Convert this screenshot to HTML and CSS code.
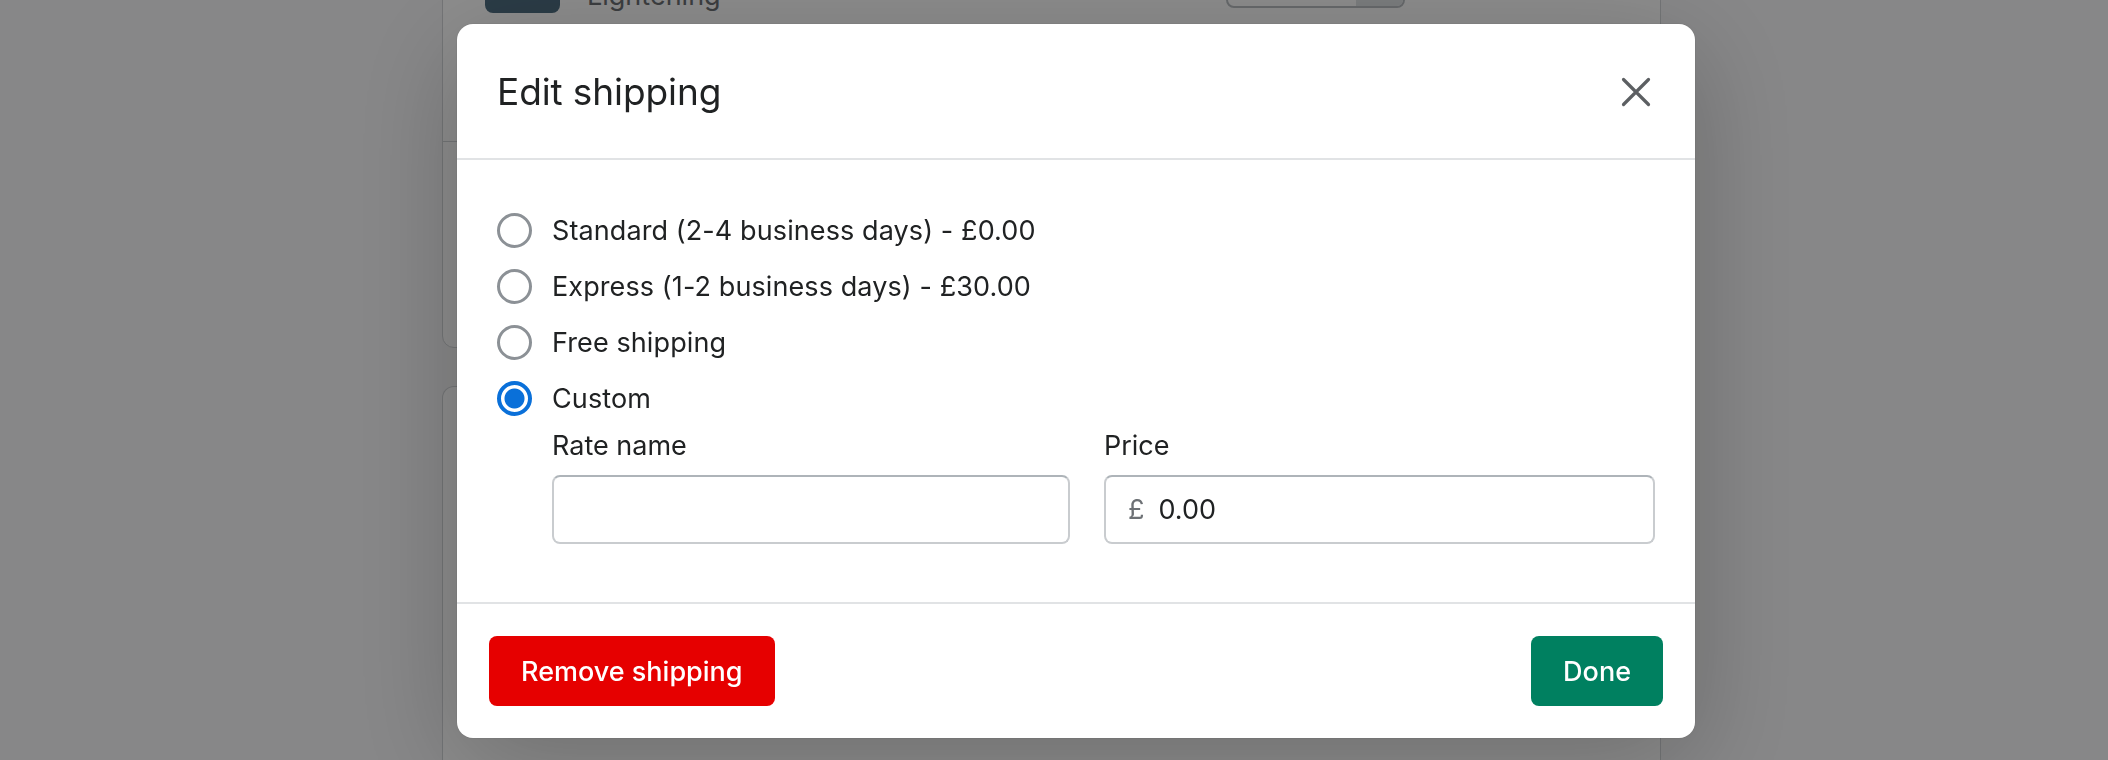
FILE: index.html
```html
<!DOCTYPE html>
<html lang="en">
<head>
    <meta charset="UTF-8">
    <meta name="viewport" content="width=device-width, initial-scale=1.0">
    <title>Order - Edit shipping</title>
    <link rel="stylesheet" href="styles.css">
</head>
<body>
    <!-- order page underneath the dialog -->
    <div class="page">
        <div class="card card-items">
            <div class="line-item">
                <div class="thumb"></div>
                <div class="item-info">
                    <div class="item-name">Brightening Serum</div>
                    <div class="item-variant">Lightening</div>
                </div>
                <div class="qty-box">
                    <span class="qty-value">1</span>
                    <span class="qty-stepper"></span>
                </div>
                <div class="item-price">£45.00</div>
            </div>
            <div class="card-section"></div>
        </div>
        <div class="card card-summary"></div>
    </div>

    <div class="backdrop"></div>

    <div class="modal-wrap">
        <div class="modal" role="dialog" aria-labelledby="modal-title">
            <div class="modal-header">
                <h2 class="modal-title" id="modal-title">Edit shipping</h2>
                <button class="close-btn" aria-label="Close">
                    <svg width="32" height="32" viewBox="0 0 32 32">
                        <path d="M3.5 3.5 L28.5 28.5 M28.5 3.5 L3.5 28.5" stroke="#5c5f62" stroke-width="3.2" stroke-linecap="round" fill="none"/>
                    </svg>
                </button>
            </div>

            <div class="modal-body">
                <label class="radio-row">
                    <input type="radio" name="rate" class="radio">
                    <span>Standard (2-4 business days) - £0.00</span>
                </label>
                <label class="radio-row">
                    <input type="radio" name="rate" class="radio">
                    <span>Express (1-2 business days) - £30.00</span>
                </label>
                <label class="radio-row">
                    <input type="radio" name="rate" class="radio">
                    <span>Free shipping</span>
                </label>
                <label class="radio-row">
                    <input type="radio" name="rate" class="radio" checked>
                    <span>Custom</span>
                </label>

                <div class="custom-fields">
                    <div class="field">
                        <label class="field-label" for="rate-name">Rate name</label>
                        <div class="text-input">
                            <input id="rate-name" type="text">
                        </div>
                    </div>
                    <div class="field">
                        <label class="field-label" for="rate-price">Price</label>
                        <div class="text-input">
                            <span class="prefix">£</span>
                            <input id="rate-price" type="text" value="0.00">
                        </div>
                    </div>
                </div>
            </div>

            <div class="modal-footer">
                <button class="btn btn-destructive">Remove shipping</button>
                <button class="btn btn-primary">Done</button>
            </div>
        </div>
    </div>
</body>
</html>
```

FILE: styles.css
```css
* {
    margin: 0;
    padding: 0;
    box-sizing: border-box;
}

body {
    font-family: Inter, 'Noto Sans', sans-serif;
    background: #f6f6f7;
    color: #202223;
    height: 760px;
    overflow: hidden;
}

/* page behind the dialog */
.page {
    width: 1219px;
    margin-left: calc(50% - 612px);
}

.card {
    background: #fff;
    border: 1px solid #d2d5d8;
    border-radius: 12px;
}

.card-items {
    margin-top: -96px;
    border-top-left-radius: 0;
    border-top-right-radius: 0;
}

.line-item {
    display: flex;
    align-items: flex-start;
    gap: 27px;
    padding: 33px 42px 0 42px;
}

.thumb {
    width: 75px;
    height: 75px;
    border-radius: 8px;
    background: #4e6d80;
}

.item-info {
    flex: 1;
    font-size: 27px;
    line-height: 36px;
    padding-top: 4px;
}

.item-variant {
    color: #6d7175;
}

.qty-box {
    display: flex;
    width: 179px;
    height: 60px;
    margin-top: 10px;
    border: 2px solid #babfc3;
    border-radius: 8px;
    overflow: hidden;
}

.qty-value {
    flex: 1;
    padding: 12px 18px;
    font-size: 27px;
}

.qty-stepper {
    width: 47px;
    background: #dfe2e5;
}

.item-price {
    width: 186px;
    text-align: right;
    font-size: 27px;
    padding-top: 14px;
}

.card-section {
    height: 206px;
    border-top: 1px solid #d2d5d8;
    margin-top: 127px;
}

/* runs on below the fold */
.card-summary {
    margin-top: 38px;
    height: 377px;
    border-bottom: none;
    border-bottom-left-radius: 0;
    border-bottom-right-radius: 0;
}

.backdrop {
    position: fixed;
    inset: 0;
    background: rgba(0, 0, 0, 0.45);
}

/* dialog */
.modal-wrap {
    position: fixed;
    inset: 0;
    display: flex;
    justify-content: center;
    align-items: flex-start;
    padding: 24px 0 0 44px;
}

.modal {
    width: 1238px;
    height: 714px;
    background: #fff;
    border-radius: 16px;
    box-shadow: 0 0 0 1px rgba(0, 0, 0, 0.04), 0 24px 110px rgba(0, 0, 0, 0.22);
    display: flex;
    flex-direction: column;
    overflow: hidden;
}

.modal-header {
    display: flex;
    align-items: center;
    justify-content: space-between;
    height: 136px;
    padding: 2px 43px 0 40px;
    border-bottom: 2px solid #e1e3e5;
}

.modal-title {
    font-size: 37px;
    font-weight: 400;
    line-height: 44px;
    letter-spacing: -0.1px;
}

.close-btn {
    background: none;
    border: none;
    width: 32px;
    height: 32px;
    cursor: pointer;
    display: flex;
}

.modal-body {
    flex: 1;
    padding: 42px 40px 0 40px;
}

.radio-row {
    display: flex;
    align-items: center;
    gap: 20px;
    height: 56px;
    font-size: 27px;
    letter-spacing: 0.1px;
    cursor: pointer;
}

.radio {
    appearance: none;
    width: 35px;
    height: 35px;
    border: 3px solid #8c9196;
    border-radius: 50%;
    background: #fff;
    flex-shrink: 0;
    margin: 0;
}

.radio:checked {
    border: 4px solid #0a70d9;
    background: radial-gradient(circle, #0a70d9 0 9.5px, #fff 10.5px);
}

.custom-fields {
    display: grid;
    grid-template-columns: 518px 1fr;
    gap: 34px;
    margin-left: 55px;
    margin-top: 2px;
}

.field-label {
    display: block;
    font-size: 27px;
    line-height: 36px;
    margin-bottom: 11px;
}

.text-input {
    display: flex;
    align-items: center;
    height: 69px;
    border: 2px solid #c9cccf;
    border-top-color: #aeb4b9;
    border-radius: 8px;
    padding: 0 22px;
    gap: 14px;
}

.text-input input {
    flex: 1;
    border: none;
    outline: none;
    font-family: inherit;
    font-size: 27px;
    color: #202223;
    background: transparent;
    min-width: 0;
}

.prefix {
    font-size: 27px;
    color: #6d7175;
}

.modal-footer {
    display: flex;
    justify-content: space-between;
    align-items: center;
    height: 136px;
    padding: 0 32px;
    border-top: 2px solid #e1e3e5;
}

.btn {
    height: 70px;
    padding: 0 32px;
    border: none;
    border-radius: 8px;
    font-family: inherit;
    font-size: 27px;
    font-weight: 500;
    color: #fff;
    cursor: pointer;
}

.btn-destructive {
    background: #e60000;
}

.btn-primary {
    background: #008060;
}
```
